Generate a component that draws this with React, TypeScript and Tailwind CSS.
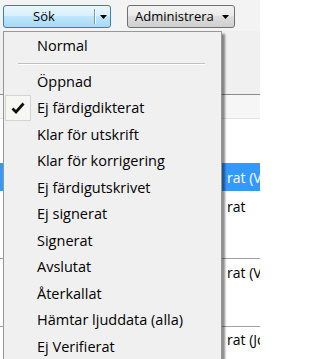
import React from 'react';

const ITEMS = [
  'Öppnad',
  'Ej färdigdikterat',
  'Klar för utskrift',
  'Klar för korrigering',
  'Ej färdigutskrivet',
  'Ej signerat',
  'Signerat',
  'Avslutat',
  'Återkallat',
  'Hämtar ljuddata (alla)',
  'Ej Verifierat',
];

const CHECKED = 'Ej färdigdikterat';

function Caret() {
  return (
    <svg viewBox="0 0 7 4" className="h-[4px] w-[7px]" aria-hidden="true">
      <path d="M0 0h7L3.5 4z" fill="#000" />
    </svg>
  );
}

function CheckMark() {
  return (
    <svg viewBox="0 0 14 12" className="h-[12px] w-[14px]" aria-hidden="true">
      <path
        d="M1.5 6.5l3.5 3.5L12.5 1.5"
        fill="none"
        stroke="#111"
        strokeWidth="2.8"
        strokeLinejoin="miter"
      />
    </svg>
  );
}

function Toolbar() {
  return (
    <div className="flex h-[31px] items-start gap-[16px] bg-[#f3f3f3] pl-[3px] pt-[5px]">
      <div className="flex h-[23px] w-[108px] items-stretch rounded-[3px] border border-[#3c7fb1] bg-[linear-gradient(#eaf6fd,#d9f0fc_45%,#bee6fd_50%,#a7d9f5)] text-[13px] text-black">
        <div className="flex flex-1 items-center justify-center pr-[10px]">Sök</div>
        <div className="my-[3px] w-[2px] border-l border-r border-l-[#6f9bbd] border-r-white" />
        <div className="flex w-[14px] items-center justify-center">
          <Caret />
        </div>
      </div>
      <div className="flex h-[23px] w-[108px] items-center justify-between rounded-[3px] border border-[#707070] bg-[linear-gradient(#f2f2f2,#ebebeb_45%,#dddddd_50%,#cfcfcf)] pl-[7px] pr-[5px] text-[13px] text-black">
        <span>Administrera</span>
        <Caret />
      </div>
    </div>
  );
}

function BackgroundList() {
  return (
    <div className="flex flex-col whitespace-nowrap text-[14px] text-black">
      <div className="h-[63px] bg-[#f0f0f0]" />
      <div className="h-px bg-[#8c8c8c]" />
      <div className="h-[23px] bg-[#f6f6f6]" />
      <div className="h-px bg-[#e2e2e2]" />
      <div className="h-[44px] bg-white" />
      <div className="flex h-[28px] items-center bg-[#3399ff] pl-[227px] text-white">rat (Vald)</div>
      <div className="h-[67px] bg-white pl-[227px] pt-[5px]">rat</div>
      <div className="h-px bg-[#a0a0a0]" />
      <div className="h-[67px] bg-white pl-[227px] pt-[3px]">rat (Vald)</div>
      <div className="h-px bg-[#a0a0a0]" />
      <div className="h-[32px] bg-white pl-[227px] pt-[2px]">rat (Journal)</div>
    </div>
  );
}

function Menu() {
  return (
    <div className="absolute left-[3px] top-[31px] w-[219px] border border-[#979797] bg-[#f0f0f0] pt-[1px] shadow-[3px_3px_2px_rgba(0,0,0,0.45)] text-[14.5px] text-black">
      <div className="flex h-[26.5px] items-center pl-[33px]">Normal</div>
      <div className="flex h-[9px] items-center pl-[14px] pr-[16px]">
        <div className="h-[2px] w-full border-t border-b border-t-[#c0c0c0] border-b-white" />
      </div>
      {ITEMS.map((label) => {
        const checked = label === CHECKED;
        return (
          <div key={label} className="relative flex h-[26.5px] items-center pl-[33px]">
            {checked && (
              <div className="absolute left-[1px] top-0 flex h-[26px] w-[26px] items-center justify-center border border-[#d4d4d4] bg-[#f6f6f2]">
                <CheckMark />
              </div>
            )}
            {label}
          </div>
        );
      })}
    </div>
  );
}

export default function App() {
  return (
    <div
      className="relative h-[359px] w-[260px] overflow-hidden bg-[#f3f3f3]"
      style={{ fontFamily: '"Open Sans", "Noto Sans", sans-serif' }}
    >
      <Toolbar />
      <BackgroundList />
      <Menu />
    </div>
  );
}
